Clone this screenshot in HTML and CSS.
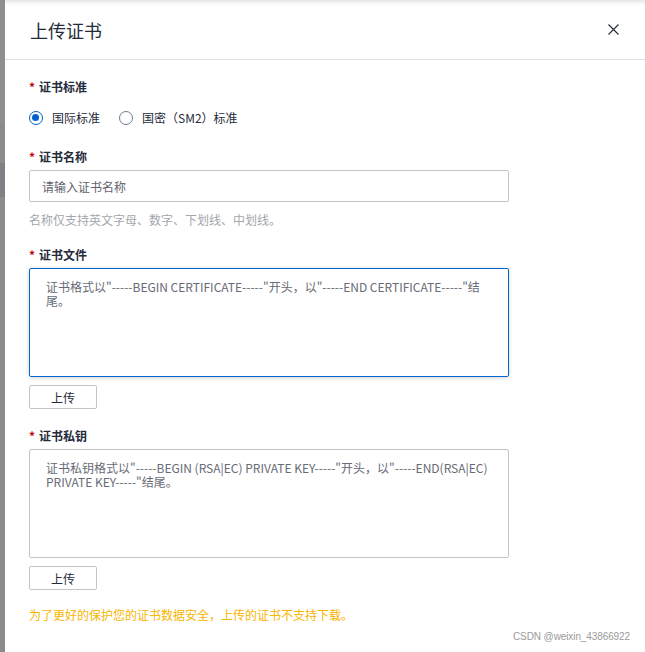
FILE: index.html
```html
<!DOCTYPE html>
<html lang="zh-CN">
<head>
<meta charset="utf-8">
<title>上传证书</title>
<link rel="stylesheet" href="styles.css">
</head>
<body>
<div class="page">
  <div class="backdrop">
    <div class="band band-a"></div>
    <div class="band band-b"></div>
    <div class="band band-c"></div>
  </div>
  <div class="dialog">
    <div class="dialog-header">
      <h1 class="dialog-title">上传证书</h1>
      <button class="close-btn" aria-label="关闭">
        <svg width="11" height="11" viewBox="0 0 11 11"><path d="M0.5 0.5L10.5 10.5M10.5 0.5L0.5 10.5" stroke="#252b3a" stroke-width="1.1" fill="none"/></svg>
      </button>
    </div>
    <div class="dialog-body">
      <div class="field-label first"><span class="req">*</span>证书标准</div>
      <div class="radio-row">
        <label class="radio"><span class="radio-dot checked"></span>国际标准</label>
        <label class="radio"><span class="radio-dot"></span>国密（SM2）标准</label>
      </div>

      <div class="field-label gap-lg"><span class="req">*</span>证书名称</div>
      <input class="text-input" type="text" placeholder="请输入证书名称">
      <div class="help">名称仅支持英文字母、数字、下划线、中划线。</div>

      <div class="field-label gap-md"><span class="req">*</span>证书文件</div>
      <div class="textarea focused">证书格式以"-----BEGIN CERTIFICATE-----"开头，以"-----END CERTIFICATE-----"结尾。</div>
      <button class="upload-btn">上传</button>

      <div class="field-label gap-lg2"><span class="req">*</span>证书私钥</div>
      <div class="textarea wide">证书私钥格式以"-----BEGIN (RSA|EC) PRIVATE KEY-----"开头，以"-----END(RSA|EC) PRIVATE KEY-----"结尾。</div>
      <button class="upload-btn">上传</button>

      <div class="warning">为了更好的保护您的证书数据安全，上传的证书不支持下载。</div>
    </div>
    <div class="watermark">CSDN @weixin_43866922</div>
  </div>
</div>
</body>
</html>
```
FILE: styles.css
```css
* { box-sizing: border-box; }
html, body { margin: 0; padding: 0; background: #fff; }
body {
  font-family: "Noto Sans CJK SC", "Microsoft YaHei", sans-serif;
  font-size: 12px;
  color: #252b3a;
}
.page {
  display: flex;
  width: 645px;
  height: 652px;
  overflow: hidden;
}
.backdrop {
  width: 5px;
  flex: none;
  background: #8b8b8b;
  display: flex;
  flex-direction: column;
}
.band-a { height: 123px; background: #8e8e8e; }
.band-b { height: 40px; background: #8b8b8b; }
.band-c { height: 34px; background: #808184; }
.dialog {
  position: relative;
  flex: 1;
  background: #fff;
  background-image: linear-gradient(to bottom, #e4e4e4 0, #f6f6f6 3px, #fff 6px);
}
.dialog-header {
  height: 60px;
  border-bottom: 1px solid #e0e1e4;
  display: flex;
  align-items: center;
  justify-content: space-between;
  padding: 0 26px 0 25px;
}
.dialog-title {
  margin: 0;
  font-size: 18px;
  font-weight: 400;
  line-height: 24px;
  color: #252b3a;
}
.close-btn {
  border: 0;
  background: none;
  padding: 0;
  width: 11px;
  height: 11px;
  display: flex;
}
.dialog-body {
  padding: 0 0 0 24px;
  display: flex;
  flex-direction: column;
  align-items: flex-start;
}
.field-label {
  height: 20px;
  line-height: 20px;
  font-weight: 700;
  color: #252b3a;
  display: flex;
  align-items: center;
}
.field-label.first { margin-top: 17px; }
.field-label.gap-lg { margin-top: 19px; }
.field-label.gap-md { margin-top: 15px; }
.field-label.gap-lg2 { margin-top: 17px; }
.req {
  color: #c7000b;
  font-weight: 700;
  margin-right: 4px;
  margin-left: 0;
}
.radio-row {
  margin-top: 11px;
  height: 20px;
  display: flex;
  align-items: center;
  gap: 19px;
}
.radio {
  display: flex;
  align-items: center;
  gap: 9px;
  color: #252b3a;
  line-height: 20px;
}
.radio-dot {
  width: 14px;
  height: 14px;
  border-radius: 50%;
  border: 1px solid #6c7a91;
  background: #fff;
  position: relative;
}
.radio-dot.checked {
  border: 1.5px solid #0062cc;
}
.radio-dot.checked::after {
  content: "";
  position: absolute;
  left: 2px;
  top: 2px;
  width: 7px;
  height: 7px;
  border-radius: 50%;
  background: #0062cc;
}
.text-input {
  margin-top: 3px;
  width: 480px;
  height: 32px;
  border: 1px solid #c2c4ca;
  border-radius: 2px;
  padding: 0 12px;
  font: inherit;
  font-size: 12px;
  color: #252b3a;
  outline: none;
}
.text-input::placeholder { color: #5f636d; }
.help {
  margin-top: 8px;
  height: 20px;
  line-height: 20px;
  color: #a3a6ad;
}
.textarea {
  margin-top: 3px;
  width: 480px;
  height: 109px;
  border: 1px solid #c2c4ca;
  border-radius: 2px;
  padding: 11px 22px 0 16px;
  line-height: 14px;
  color: #676b75;
}
.textarea.wide {
  padding-right: 3px;
}
.textarea.focused {
  border-color: #0067d1;
  box-shadow: 0 1px 4px rgba(0, 0, 0, 0.18);
}
.upload-btn {
  margin-top: 8px;
  width: 68px;
  height: 24px;
  border: 1px solid #c2c4ca;
  border-radius: 2px;
  background: #fff;
  font: inherit;
  font-size: 12px;
  color: #252b3a;
  padding: 0;
}
.warning {
  margin-top: 15px;
  line-height: 20px;
  color: #f7b500;
}
.watermark {
  position: absolute;
  right: 15px;
  top: 629px;
  font-family: "Liberation Sans", Arial, sans-serif;
  font-size: 10px;
  letter-spacing: -0.1px;
  line-height: 16px;
  color: #9a9a9a;
}
```
